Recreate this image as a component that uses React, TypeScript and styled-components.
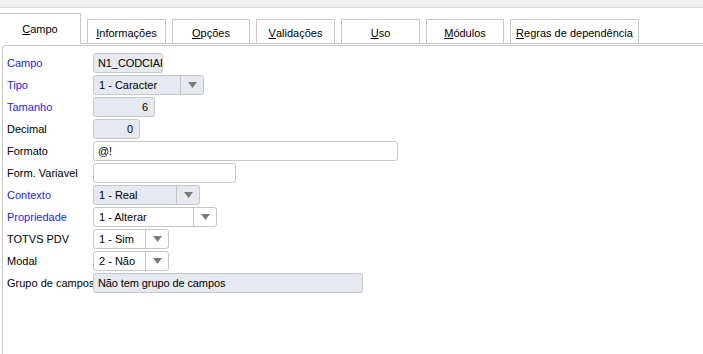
import React from "react";
import styled, { createGlobalStyle } from "styled-components";

const GlobalStyle = createGlobalStyle`
  html, body {
    margin: 0;
    padding: 0;
    background: #ffffff;
    font-family: "Liberation Sans", Arial, sans-serif;
    font-size: 11px;
    color: #000000;
  }
`;

type Field =
  | { label: string; blue?: boolean; kind: "input"; value: string; width: number; readonly?: boolean; align?: "left" | "right" }
  | { label: string; blue?: boolean; kind: "select"; value: string; width: number; readonly?: boolean };

const fields: Field[] = [
  { label: "Campo", blue: true, kind: "input", value: "N1_CODCIAF", width: 70, readonly: true },
  { label: "Tipo", blue: true, kind: "select", value: "1 - Caracter", width: 111, readonly: true },
  { label: "Tamanho", blue: true, kind: "input", value: "6", width: 62, readonly: true, align: "right" },
  { label: "Decimal", kind: "input", value: "0", width: 47, readonly: true, align: "right" },
  { label: "Formato", kind: "input", value: "@!", width: 305 },
  { label: "Form. Variavel", kind: "input", value: "", width: 143 },
  { label: "Contexto", blue: true, kind: "select", value: "1 - Real", width: 107, readonly: true },
  { label: "Propriedade", blue: true, kind: "select", value: "1 - Alterar", width: 124 },
  { label: "TOTVS PDV", kind: "select", value: "1 - Sim", width: 76 },
  { label: "Modal", kind: "select", value: "2 - Não", width: 76 },
  { label: "Grupo de campos", kind: "input", value: "Não tem grupo de campos", width: 270, readonly: true },
];

const tabs = [
  { mn: "C", rest: "ampo", width: 81 },
  { mn: "I", rest: "nformações", width: 79 },
  { mn: "O", rest: "pções", width: 78 },
  { mn: "V", rest: "alidações", width: 79 },
  { mn: "U", rest: "so", width: 79 },
  { mn: "M", rest: "ódulos", width: 78 },
  { mn: "R", rest: "egras de dependência", width: 129 },
];

const Arrow = () => (
  <svg width="9" height="6" viewBox="0 0 9 6">
    <path d="M0 0 H9 L4.5 6 Z" fill="#7a7a7a" />
  </svg>
);

const App: React.FC = () => {
  return (
    <Page>
      <GlobalStyle />
      <TopStrip />
      <TabBar>
        {tabs.map((t, i) => (
          <Tab key={t.mn + t.rest} active={i === 0} style={{ width: t.width }}>
            <u>{t.mn}</u>
            {t.rest}
          </Tab>
        ))}
      </TabBar>
      <Panel>
        {fields.map((f) => (
          <Row key={f.label}>
            <Label blue={f.blue}>{f.label}</Label>
            {f.kind === "input" ? (
              <TextBox readonly={f.readonly} align={f.align} style={{ width: f.width }}>
                {f.value}
              </TextBox>
            ) : (
              <SelectBox readonly={f.readonly} style={{ width: f.width }}>
                <SelectValue>{f.value}</SelectValue>
                <SelectButton>
                  <Arrow />
                </SelectButton>
              </SelectBox>
            )}
          </Row>
        ))}
      </Panel>
    </Page>
  );
};

export default App;

// ------------------ Styled Components ------------------

const Page = styled.div`
  width: 703px;
  height: 354px;
  overflow: hidden;
  display: flex;
  flex-direction: column;
  background: #ffffff;
`;

const TopStrip = styled.div`
  height: 7px;
  background: #f0f0f0;
  border-bottom: 1px solid #dadada;
  flex-shrink: 0;
`;

const TabBar = styled.div`
  height: 35px;
  display: flex;
  align-items: flex-end;
  gap: 6px;
  border-bottom: 1px solid #c9c9c9;
  flex-shrink: 0;
`;

const Tab = styled.div<{ active?: boolean }>`
  box-sizing: border-box;
  height: ${({ active }) => (active ? "31px" : "25px")};
  margin-bottom: -1px;
  display: flex;
  align-items: center;
  justify-content: center;
  padding-top: ${({ active }) => (active ? "0" : "2px")};
  border: 1px solid #c9c9c9;
  border-bottom: ${({ active }) => (active ? "1px solid #ffffff" : "1px solid #c9c9c9")};
  border-left: ${({ active }) => (active ? "none" : "1px solid #c9c9c9")};
  background: #ffffff;
  font-size: 11px;
  color: #000000;
  white-space: nowrap;
`;

const Panel = styled.div`
  flex: 1;
  margin: 1px 0 0 2px;
  border-top: 1px solid #c9c9c9;
  border-left: 1px solid #c9c9c9;
  border-top-left-radius: 4px;
  padding: 7px 0 0 4px;
  display: flex;
  flex-direction: column;
  gap: 2px;
`;

const Row = styled.div`
  display: flex;
  align-items: center;
  height: 20px;
`;

const Label = styled.div<{ blue?: boolean }>`
  width: 86px;
  flex-shrink: 0;
  white-space: nowrap;
  color: ${({ blue }) => (blue ? "#2323ec" : "#000000")};
  font-size: 11px;
`;

const TextBox = styled.div<{ readonly?: boolean; align?: "left" | "right" }>`
  box-sizing: border-box;
  height: 20px;
  border: 1px solid #c6c6c6;
  border-radius: 3px;
  background: ${({ readonly }) => (readonly ? "#e6e9ef" : "#ffffff")};
  padding: ${({ align }) => (align === "right" ? "0 6px 0 5px" : "0 0 0 4px")};
  display: flex;
  align-items: center;
  justify-content: ${({ align }) => (align === "right" ? "flex-end" : "flex-start")};
  overflow: hidden;
  white-space: nowrap;
  letter-spacing: -0.1px;
  font-size: 11px;
`;

const SelectBox = styled.div<{ readonly?: boolean }>`
  box-sizing: border-box;
  height: 20px;
  border: 1px solid #c6c6c6;
  border-radius: 3px;
  background: ${({ readonly }) => (readonly ? "#e6e9ef" : "#ffffff")};
  display: flex;
  align-items: stretch;
  overflow: hidden;
`;

const SelectValue = styled.div`
  flex: 1;
  display: flex;
  align-items: center;
  padding-left: 5px;
  white-space: nowrap;
  overflow: hidden;
  font-size: 11px;
`;

const SelectButton = styled.div`
  width: 22px;
  flex-shrink: 0;
  border-left: 1px solid #c6c6c6;
  display: flex;
  align-items: center;
  justify-content: center;
`;
